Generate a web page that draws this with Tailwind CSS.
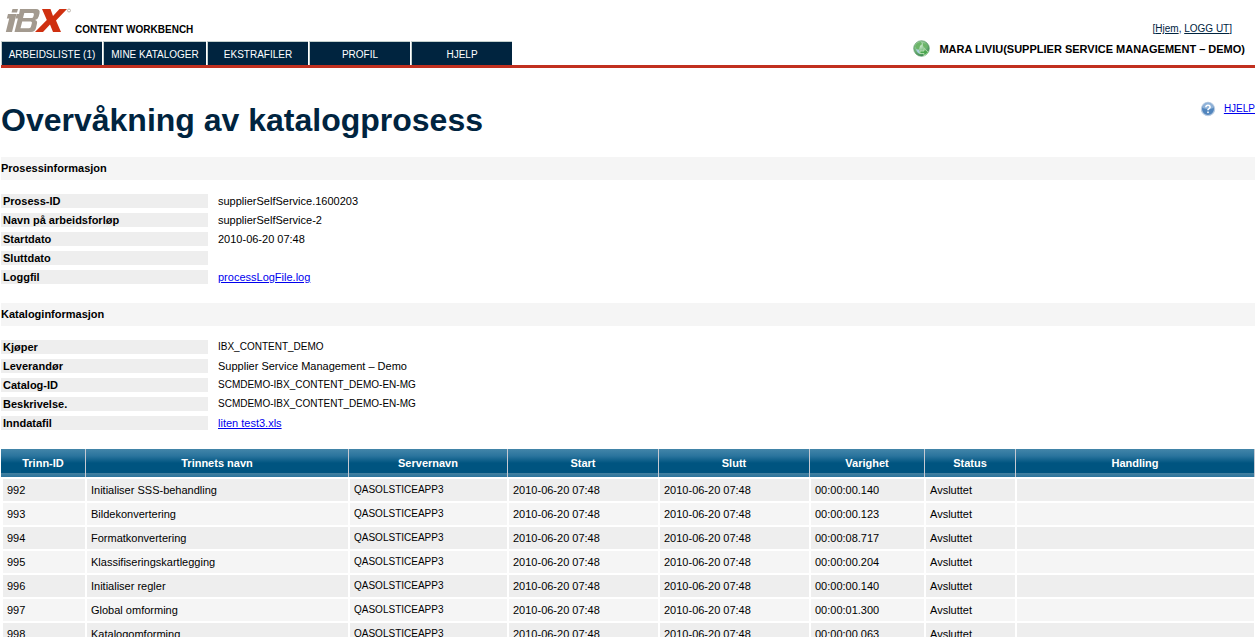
<!DOCTYPE html>
<html lang="no">
<head>
<meta charset="utf-8">
<title>Overvåkning av katalogprosess</title>
<script src="https://cdn.jsdelivr.net/npm/@tailwindcss/browser@4"></script>
</head>
<body class="bg-white pl-px pr-0.5 text-[11px] leading-[14px] text-black font-['Liberation_Sans',Arial,sans-serif]">
<header class="flex h-[68px] items-end justify-between border-b-3 border-[#c1301f]">
  <div>
    <div class="flex items-end gap-0.5 pb-1.5 pl-1">
      <svg class="h-[30px] w-[68px]" viewBox="0 0 68 30" role="img" aria-label="iBX">
        <g fill="#a39a8f">
          <path d="M7.500 4H13l-1 3.500H6.500zM3 9h8.500L7 27H.8l3.400-13.500H1.800z"/>
          <path fill-rule="evenodd" d="M15 4h16q4.500 0 3.500 4.500l-.8 3q-.8 3-3.700 3.500 2.600.7 2 3.500l-1 4.500q-1 4-5 4H9.500l3.400-13.500h-2.400l1.200-4.500h2.400zM19.300 8l-1.300 5h8.500q1.500 0 1.900-1.500l.5-2q.4-1.500-1.200-1.500zM17.200 16.500L15.500 23.200h8.600q1.500 0 1.900-1.600l.9-3.600q.4-1.500-1.200-1.500z"/>
        </g>
        <path fill="#cf3010" d="M37 4h8.500l2.500 7 6.500-7H62L51 15.500 56 27h-8l-3-7.500L38 27h-8l11.800-12z"/>
        <circle cx="64" cy="5.500" r="1.500" fill="none" stroke="#bdb5ac"/>
      </svg>
      <span class="text-[10px] font-bold leading-[11px]">CONTENT WORKBENCH</span>
    </div>
    <nav class="flex gap-px text-center text-[10px] leading-[21px] text-white">
      <a href="#" class="w-[101px] whitespace-nowrap border-l border-t border-[#c3d0cd] bg-[#00243f] pt-0.5">ARBEIDSLISTE (1)</a>
      <a href="#" class="w-[103px] whitespace-nowrap border-l border-t border-[#c3d0cd] bg-[#00243f] pt-0.5">MINE KATALOGER</a>
      <a href="#" class="w-[101px] border-l border-t border-[#c3d0cd] bg-[#00243f] pt-0.5">EKSTRAFILER</a>
      <a href="#" class="w-[101px] border-l border-t border-[#c3d0cd] bg-[#00243f] pt-0.5">PROFIL</a>
      <a href="#" class="w-[101px] border-l border-t border-[#c3d0cd] bg-[#00243f] pt-0.5">HJELP</a>
    </nav>
  </div>
  <div class="flex flex-col items-end pb-2">
    <div class="pr-[23px] text-[10px] text-[#00243f]">[<a href="#" class="underline">Hjem</a>, <a href="#" class="underline">LOGG UT</a>]</div>
    <div class="flex items-center gap-[9px] pr-2.5 pt-1 font-bold">
      <svg class="size-[17px]" viewBox="0 0 17 17" aria-hidden="true">
        <defs><radialGradient id="globe" cx=".4" cy=".3" r=".75"><stop offset="0" stop-color="#d3eed2"/><stop offset=".55" stop-color="#74b77c"/><stop offset="1" stop-color="#2f8047"/></radialGradient></defs>
        <circle cx="8.5" cy="8.500" r="7.800" fill="url(#globe)" stroke="#5f9b68" stroke-width=".7"/>
        <path d="M2 6q2-4 6-4l1 2-2 2-1 3-2 1zM10 3l3 1 2 3-3 1-2-2z" fill="#6cb568"/>
        <path d="M3 9l3 1 1 4q-3-1-4-5" fill="#a9cfe0"/>
        <path d="M7 11h4V8.500l4.500 3.800-4.500 3.700v-2.500H7z" fill="#4ba64f" stroke="#d5efc9" stroke-width=".7"/>
      </svg>
      <span>MARA LIVIU(SUPPLIER SERVICE MANAGEMENT – DEMO)</span>
    </div>
  </div>
</header>

<main>
  <div class="flex items-start justify-between pt-[33px]">
    <h1 class="text-[32px] font-bold leading-[38px] text-[#00243f]">Overvåkning av katalogprosess</h1>
    <a href="#" class="flex items-center gap-2 text-[10px] text-[#0000ee]">
      <svg class="size-4" viewBox="0 0 16 16" aria-hidden="true">
        <circle cx="8" cy="8" r="6.600" fill="#5185bd" stroke="#b9cce2" stroke-width="1.200"/>
        <path d="M2.500 7a5.500 5.500 0 0 1 11 0q-5 2-11 0" fill="#8fb2d8"/>
        <path d="M5.800 6.300Q6 4.300 8 4.300T10.200 6.100Q10.200 7.300 8 8.600V9.300" fill="none" stroke="#fff" stroke-width="1.500"/>
        <rect x="7.200" y="10.500" width="1.600" height="1.600" fill="#fff"/>
      </svg>
      <span class="underline">HJELP</span>
    </a>
  </div>

  <section class="pt-[18px]">
    <h2 class="bg-[#f5f5f5] font-bold leading-[23px]">Prosessinformasjon</h2>
    <dl class="grid grid-cols-[207px_1fr] gap-x-2.5 gap-y-[5px] pt-3.5">
      <dt class="bg-[#eee] pl-0.5 font-bold">Prosess-ID</dt><dd>supplierSelfService.1600203</dd>
      <dt class="bg-[#eee] pl-0.5 font-bold">Navn på arbeidsforløp</dt><dd>supplierSelfService-2</dd>
      <dt class="bg-[#eee] pl-0.5 font-bold">Startdato</dt><dd>2010-06-20 07:48</dd>
      <dt class="bg-[#eee] pl-0.5 font-bold">Sluttdato</dt><dd></dd>
      <dt class="bg-[#eee] pl-0.5 font-bold">Loggfil</dt><dd><a href="#" class="text-[#0000ee] underline">processLogFile.log</a></dd>
    </dl>
  </section>

  <section class="pt-[19px]">
    <h2 class="bg-[#f5f5f5] font-bold leading-[23px]">Kataloginformasjon</h2>
    <dl class="grid grid-cols-[207px_1fr] gap-x-2.5 gap-y-[5px] pt-3.5">
      <dt class="bg-[#eee] pl-0.5 font-bold">Kjøper</dt><dd class="text-[10px]">IBX_CONTENT_DEMO</dd>
      <dt class="bg-[#eee] pl-0.5 font-bold">Leverandør</dt><dd>Supplier Service Management – Demo</dd>
      <dt class="bg-[#eee] pl-0.5 font-bold">Catalog-ID</dt><dd class="text-[10px]">SCMDEMO-IBX_CONTENT_DEMO-EN-MG</dd>
      <dt class="bg-[#eee] pl-0.5 font-bold">Beskrivelse.</dt><dd class="text-[10px]">SCMDEMO-IBX_CONTENT_DEMO-EN-MG</dd>
      <dt class="bg-[#eee] pl-0.5 font-bold">Inndatafil</dt><dd><a href="#" class="text-[#0000ee] underline">liten test3.xls</a></dd>
    </dl>
  </section>

  <table class="mt-[19px] w-full table-fixed border-separate border-spacing-0 text-left [&_td]:h-6 [&_td]:border-x [&_td]:border-t-2 [&_td]:border-white [&_td]:pl-1 [&_td:first-child]:border-l-2 [&_td:nth-child(3)]:text-[10px] [&_th]:h-7 [&_th]:border-r [&_th]:border-[#c5c9d2] [&_th]:text-center [&_tbody_tr:nth-child(odd)]:bg-[#eee] [&_tbody_tr:nth-child(even)]:bg-[#f5f5f5]">
    <colgroup><col class="w-[85px]"><col class="w-[263px]"><col class="w-[159px]"><col class="w-[151px]"><col class="w-[151px]"><col class="w-[115px]"><col class="w-[91px]"><col></colgroup>
    <thead class="text-white">
      <tr class="bg-[linear-gradient(#4385a9_0px,#2a749d_7px,#005480_14px,#005480_24px,#44809f_24px,#2a749d_28px)]">
        <th>Trinn-ID</th><th>Trinnets navn</th><th>Servernavn</th><th>Start</th><th>Slutt</th><th>Varighet</th><th>Status</th><th>Handling</th>
      </tr>
    </thead>
    <tbody>
      <tr><td>992</td><td>Initialiser SSS-behandling</td><td>QASOLSTICEAPP3</td><td>2010-06-20 07:48</td><td>2010-06-20 07:48</td><td>00:00:00.140</td><td>Avsluttet</td><td></td></tr>
      <tr><td>993</td><td>Bildekonvertering</td><td>QASOLSTICEAPP3</td><td>2010-06-20 07:48</td><td>2010-06-20 07:48</td><td>00:00:00.123</td><td>Avsluttet</td><td></td></tr>
      <tr><td>994</td><td>Formatkonvertering</td><td>QASOLSTICEAPP3</td><td>2010-06-20 07:48</td><td>2010-06-20 07:48</td><td>00:00:08.717</td><td>Avsluttet</td><td></td></tr>
      <tr><td>995</td><td>Klassifiseringskartlegging</td><td>QASOLSTICEAPP3</td><td>2010-06-20 07:48</td><td>2010-06-20 07:48</td><td>00:00:00.204</td><td>Avsluttet</td><td></td></tr>
      <tr><td>996</td><td>Initialiser regler</td><td>QASOLSTICEAPP3</td><td>2010-06-20 07:48</td><td>2010-06-20 07:48</td><td>00:00:00.140</td><td>Avsluttet</td><td></td></tr>
      <tr><td>997</td><td>Global omforming</td><td>QASOLSTICEAPP3</td><td>2010-06-20 07:48</td><td>2010-06-20 07:48</td><td>00:00:01.300</td><td>Avsluttet</td><td></td></tr>
      <tr><td>998</td><td>Katalogomforming</td><td>QASOLSTICEAPP3</td><td>2010-06-20 07:48</td><td>2010-06-20 07:48</td><td>00:00:00.063</td><td>Avsluttet</td><td></td></tr>
    </tbody>
  </table>
</main>
</body>
</html>
